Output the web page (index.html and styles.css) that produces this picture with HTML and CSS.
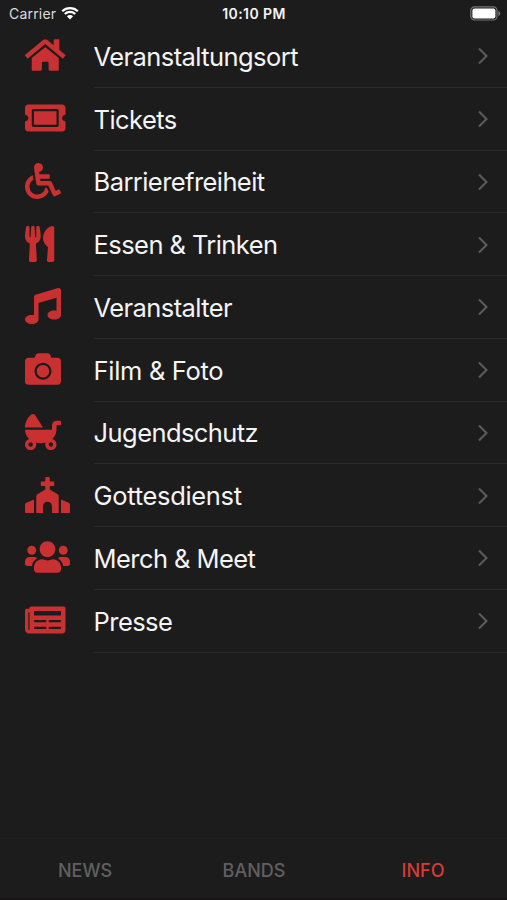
FILE: index.html
```html
<!DOCTYPE html>
<html lang="de">
<head>
<meta charset="utf-8">
<title>Info</title>
<link rel="stylesheet" href="styles.css">
</head>
<body>
<div class="app">
  <header class="status">
    <div class="carrier">Carrier
      <svg class="wifi" viewBox="0 0 18 14"><path d="M1.2 5.2a11.2 11.2 0 0 1 15.6 0M3.8 8a7.4 7.4 0 0 1 10.4 0" fill="none" stroke="#fff" stroke-width="2.2"/><path d="M9 13.5L5.9 10.3a4.4 4.4 0 0 1 6.2 0z" fill="#fff"/></svg>
    </div>
    <div class="time">10:10 PM</div>
    <svg class="battery" viewBox="0 0 31 15"><rect x=".8" y=".8" width="26.2" height="13.2" rx="3.8" fill="none" stroke="#777" stroke-width="1.2"/><rect x="2.4" y="2.4" width="23" height="10" rx="2" fill="#fff"/><path d="M28.3 5v5q2-.8 2-2.5t-2-2.5z" fill="#777"/></svg>
  </header>
  <main class="list">
    <a class="row"><svg class="icon" viewBox="0 0 640 512"><path d="M280.37 148.26L96 300.11V464a16 16 0 0 0 16 16l112.06-.29a16 16 0 0 0 15.92-16V368a16 16 0 0 1 16-16h64a16 16 0 0 1 16 16v95.64a16 16 0 0 0 16 16.05L464 480a16 16 0 0 0 16-16V300L295.67 148.26a12.19 12.19 0 0 0-15.3 0zM571.6 251.47L488 182.56V44.05a12 12 0 0 0-12-12h-56a12 12 0 0 0-12 12v72.61L318.47 43a48 48 0 0 0-61 0L4.34 251.47a12 12 0 0 0-1.6 16.9l25.5 31A12 12 0 0 0 45.15 301l235.22-193.74a12.19 12.19 0 0 1 15.3 0L530.9 301a12 12 0 0 0 16.9-1.6l25.5-31a12 12 0 0 0-1.7-16.93z"/></svg><span class="label"><span class="text">Veranstaltungsort</span><svg class="chevron" viewBox="0 0 12 18"><path d="M2 1.5L9.5 9L2 16.5"/></svg></span></a>
    <a class="row"><svg class="icon" viewBox="0 0 640 512"><path d="M128 160h320v192H128V160zm400 96c0 26.51 21.49 48 48 48v96c0 26.51-21.49 48-48 48H48c-26.51 0-48-21.49-48-48v-96c26.51 0 48-21.49 48-48s-21.49-48-48-48v-96c0-26.51 21.49-48 48-48h480c26.51 0 48 21.49 48 48v96c-26.51 0-48 21.49-48 48zm-48-104c0-13.255-10.745-24-24-24H120c-13.255 0-24 10.745-24 24v208c0 13.255 10.745 24 24 24h336c13.255 0 24-10.745 24-24V152z"/></svg><span class="label"><span class="text">Tickets</span><svg class="chevron" viewBox="0 0 12 18"><path d="M2 1.5L9.5 9L2 16.5"/></svg></span></a>
    <a class="row"><svg class="icon" viewBox="0 0 640 512"><path d="M496.101 385.669l14.227 28.663c3.929 7.915.697 17.516-7.218 21.445l-65.465 32.886c-16.049 7.967-35.556 1.194-43.189-15.055L331.679 320H192c-15.925 0-29.426-11.71-31.679-27.475C126.433 55.308 128.38 70.044 128 64c0-36.358 30.318-65.635 67.052-63.929 33.271 1.545 60.048 28.905 60.925 62.201.868 32.933-23.152 60.423-54.608 65.039l4.67 32.69H336c8.837 0 16 7.163 16 16v32c0 8.837-7.163 16-16 16H215.182l4.572 32H352a32 32 0 0 1 28.962 18.392L438.477 396.8l36.178-18.349c7.915-3.929 17.517-.697 21.446 7.218zM311.358 352h-24.506c-7.788 54.204-54.528 96-110.852 96-61.757 0-112-50.243-112-112 0-41.505 22.694-77.809 56.324-97.156-3.712-25.965-6.844-47.86-9.488-66.333C45.956 198.464 0 261.963 0 336c0 97.047 78.953 176 176 176 71.87 0 133.806-43.308 161.11-105.192L311.358 352z"/></svg><span class="label"><span class="text">Barrierefreiheit</span><svg class="chevron" viewBox="0 0 12 18"><path d="M2 1.5L9.5 9L2 16.5"/></svg></span></a>
    <a class="row"><svg class="icon" viewBox="0 0 640 512"><path d="M207.9 15.2c.8 4.7 16.1 94.5 16.1 128.8 0 52.3-27.8 89.6-68.9 104.6L168 486.7c.7 13.7-10.2 25.3-24 25.3H80c-13.7 0-24.7-11.5-24-25.3l12.9-238.1C27.7 233.6 0 196.2 0 144 0 109.6 15.3 19.9 16.1 15.2 19.3-5.1 61.4-5.4 64 16.3v141.2c1.3 3.4 15.1 3.2 16 0 1.4-25.3 7.9-139.2 8-141.8 3.3-20.8 44.7-20.8 47.9 0 .2 2.7 6.6 116.5 8 141.8.9 3.2 14.8 3.4 16 0V16.3c2.6-21.6 44.8-21.4 48-1.1zm119.2 285.7l-15 185.1c-1.2 14 9.9 26 23.9 26h56c13.3 0 24-10.7 24-24V24c0-13.2-10.7-24-24-24-82.5 0-221.4 178.5-64.9 300.9z"/></svg><span class="label"><span class="text">Essen &amp; Trinken</span><svg class="chevron" viewBox="0 0 12 18"><path d="M2 1.5L9.5 9L2 16.5"/></svg></span></a>
    <a class="row"><svg class="icon" viewBox="0 0 640 512"><path d="M511.99 32.01c0-21.71-21.1-37.01-41.6-30.51L150.4 96c-13.3 4.2-22.4 16.5-22.4 30.5v261.42c-10.05-2.38-20.72-3.92-32-3.92-53.02 0-96 28.65-96 64s42.98 64 96 64 96-28.65 96-64V214.31l256-75.02v184.63c-10.05-2.38-20.72-3.92-32-3.92-53.02 0-96 28.65-96 64s42.98 64 96 64 96-28.65 96-64l-.01-351.99z"/></svg><span class="label"><span class="text">Veranstalter</span><svg class="chevron" viewBox="0 0 12 18"><path d="M2 1.5L9.5 9L2 16.5"/></svg></span></a>
    <a class="row"><svg class="icon" viewBox="0 0 640 512"><path d="M512 144v288c0 26.5-21.5 48-48 48H48c-26.5 0-48-21.5-48-48V144c0-26.5 21.5-48 48-48h88l12.3-32.9c7-18.7 24.9-31.1 44.9-31.1h125.5c20 0 37.9 12.4 44.9 31.1L376 96h88c26.5 0 48 21.5 48 48zM376 288c0-66.2-53.8-120-120-120s-120 53.8-120 120 53.8 120 120 120 120-53.8 120-120zm-32 0c0 48.5-39.5 88-88 88s-88-39.5-88-88 39.5-88 88-88 88 39.5 88 88z"/></svg><span class="label"><span class="text wide">Film &amp; Foto</span><svg class="chevron" viewBox="0 0 12 18"><path d="M2 1.5L9.5 9L2 16.5"/></svg></span></a>
    <a class="row"><svg class="icon" viewBox="0 0 640 512"><path d="M144.8 17c-11.3-17.8-37.2-22.8-54-9.4C35.3 51.9 0 118 0 192h256L144.8 17zM496 96h-48c-35.3 0-64 28.7-64 64v64H0c0 50.6 23 96.4 60.3 130.7C25.7 363.6 0 394.7 0 432c0 44.2 35.8 80 80 80s80-35.8 80-80c0-8.9-1.8-17.2-4.4-25.2 21.6 5.9 44.6 9.2 68.4 9.2s46.9-3.3 68.4-9.2c-2.7 8-4.4 16.3-4.4 25.2 0 44.2 35.8 80 80 80s80-35.8 80-80c0-37.3-25.7-68.4-60.3-77.3C425 320.4 448 274.6 448 224v-64h48c8.8 0 16-7.2 16-16v-32c0-8.8-7.2-16-16-16zM80 464c-17.6 0-32-14.4-32-32s14.4-32 32-32 32 14.4 32 32-14.4 32-32 32zm320-32c0 17.6-14.4 32-32 32s-32-14.4-32-32 14.4-32 32-32 32 14.4 32 32z"/></svg><span class="label"><span class="text">Jugendschutz</span><svg class="chevron" viewBox="0 0 12 18"><path d="M2 1.5L9.5 9L2 16.5"/></svg></span></a>
    <a class="row"><svg class="icon" viewBox="0 0 640 512"><path d="M464.42 246.68L352 179.2V128h48c8.84 0 16-7.16 16-16V80c0-8.84-7.16-16-16-16h-48V16c0-8.84-7.16-16-16-16h-32c-8.84 0-16 7.16-16 16v48h-48c-8.84 0-16 7.16-16 16v32c0 8.84 7.16 16 16 16h48v51.2l-112.42 67.48A32 32 0 0 0 160 274.12V512h96v-96c0-35.35 28.65-64 64-64s64 28.65 64 64v96h96V274.12c0-11.24-5.9-21.66-15.58-27.44zM0 395.96V496c0 8.84 7.16 16 16 16h112V320L19.39 366.54A32.024 32.024 0 0 0 0 395.96zm620.61-29.42L512 320v192h112c8.84 0 16-7.16 16-16V395.96c0-12.8-7.63-24.37-19.39-29.42z"/></svg><span class="label"><span class="text wide">Gottesdienst</span><svg class="chevron" viewBox="0 0 12 18"><path d="M2 1.5L9.5 9L2 16.5"/></svg></span></a>
    <a class="row"><svg class="icon" viewBox="0 0 640 512"><path d="M96 224c35.3 0 64-28.7 64-64s-28.7-64-64-64-64 28.7-64 64 28.7 64 64 64zm448 0c35.3 0 64-28.7 64-64s-28.7-64-64-64-64 28.7-64 64 28.7 64 64 64zm32 32h-64c-17.6 0-33.5 7.1-45.1 18.6 40.3 22.1 68.9 62 75.1 109.4h66c17.7 0 32-14.3 32-32v-32c0-35.3-28.7-64-64-64zm-256 0c61.9 0 112-50.1 112-112S381.9 32 320 32 208 82.1 208 144s50.1 112 112 112zm76.8 32h-8.3c-20.8 10-43.9 16-68.5 16s-47.6-6-68.5-16h-8.3C179.6 288 128 339.6 128 403.2V432c0 26.5 21.5 48 48 48h288c26.5 0 48-21.5 48-48v-28.8c0-63.6-51.6-115.2-115.2-115.2zm-223.7-13.4C161.5 263.1 145.6 256 128 256H64c-35.3 0-64 28.7-64 64v32c0 17.7 14.3 32 32 32h65.9c6.3-47.4 34.9-87.3 75.2-109.4z"/></svg><span class="label"><span class="text">Merch &amp; Meet</span><svg class="chevron" viewBox="0 0 12 18"><path d="M2 1.5L9.5 9L2 16.5"/></svg></span></a>
    <a class="row"><svg class="icon" viewBox="0 0 640 512"><path d="M552 64H88c-13.255 0-24 10.745-24 24v8H24c-13.255 0-24 10.745-24 24v272c0 30.928 25.072 56 56 56h472c26.51 0 48-21.49 48-48V88c0-13.255-10.745-24-24-24zM56 400a8 8 0 0 1-8-8V144h16v248a8 8 0 0 1-8 8zm236-16H140c-6.627 0-12-5.373-12-12v-8c0-6.627 5.373-12 12-12h152c6.627 0 12 5.373 12 12v8c0 6.627-5.373 12-12 12zm208 0H348c-6.627 0-12-5.373-12-12v-8c0-6.627 5.373-12 12-12h152c6.627 0 12 5.373 12 12v8c0 6.627-5.373 12-12 12zm-208-96H140c-6.627 0-12-5.373-12-12v-8c0-6.627 5.373-12 12-12h152c6.627 0 12 5.373 12 12v8c0 6.627-5.373 12-12 12zm208 0H348c-6.627 0-12-5.373-12-12v-8c0-6.627 5.373-12 12-12h152c6.627 0 12 5.373 12 12v8c0 6.627-5.373 12-12 12zm0-96H140c-6.627 0-12-5.373-12-12v-40c0-6.627 5.373-12 12-12h360c6.627 0 12 5.373 12 12v40c0 6.627-5.373 12-12 12z"/></svg><span class="label"><span class="text">Presse</span><svg class="chevron" viewBox="0 0 12 18"><path d="M2 1.5L9.5 9L2 16.5"/></svg></span></a>
  </main>
  <nav class="tabs">
    <a class="tab">NEWS</a>
    <a class="tab">BANDS</a>
    <a class="tab active">INFO</a>
  </nav>
</div>
</body>
</html>
```
FILE: styles.css
```css
* { box-sizing: border-box; }
body {
  margin: 0;
  background: #1c1c1c;
  color: #f4f4f4;
  font-family: Inter, "Liberation Sans", sans-serif;
}
.app {
  height: 900px;
  display: flex;
  flex-direction: column;
  overflow: hidden;
  border-bottom: 2px solid #1a1317;
}
.status {
  height: 25px;
  flex: none;
  display: grid;
  grid-template-columns: 1fr auto 1fr;
  align-items: center;
  padding: 2px 6px 0 9px;
  font-size: 14px;
}
.carrier {
  display: flex;
  align-items: center;
  gap: 5px;
  color: #ddd;
  letter-spacing: .2px;
}
.wifi { width: 18px; height: 14px; margin-bottom: 2px; }
.time { font-weight: 600; font-size: 14px; letter-spacing: .4px; margin-right: 2px; }
.battery { width: 31px; height: 15px; justify-self: end; }
.list { flex: none; }
.row {
  height: 62.75px;
  display: flex;
  align-items: center;
  padding-left: 25.2px;
}
.icon {
  width: 45px;
  height: 36px;
  flex: none;
  margin: 0 23.8px 2px 0;
  fill: #c93031;
}
.label {
  flex: 1;
  height: 100%;
  display: flex;
  align-items: center;
  justify-content: space-between;
  padding-right: 18.5px;
  border-bottom: 1px solid #292929;
}
.text {
  font-size: 25.5px;
  letter-spacing: -.58px;
  margin: 1px 0 0 -.4px;
  white-space: nowrap;
}
.wide { letter-spacing: -.32px; }
.chevron { width: 12px; height: 18px; margin-top: 1px; }
.chevron path { fill: none; stroke: #5c5c5c; stroke-width: 2; }
.tabs {
  height: 60px;
  flex: none;
  margin-top: auto;
  display: grid;
  grid-template-columns: repeat(3, 1fr);
  align-items: center;
  padding-top: 3px;
  border-top: 1px solid #1f1f1f;
  text-align: center;
  font-size: 18px;
  font-weight: 500;
}
.tab { color: #606060; padding-left: 1px; }
.active { color: #d93a37; }
```
